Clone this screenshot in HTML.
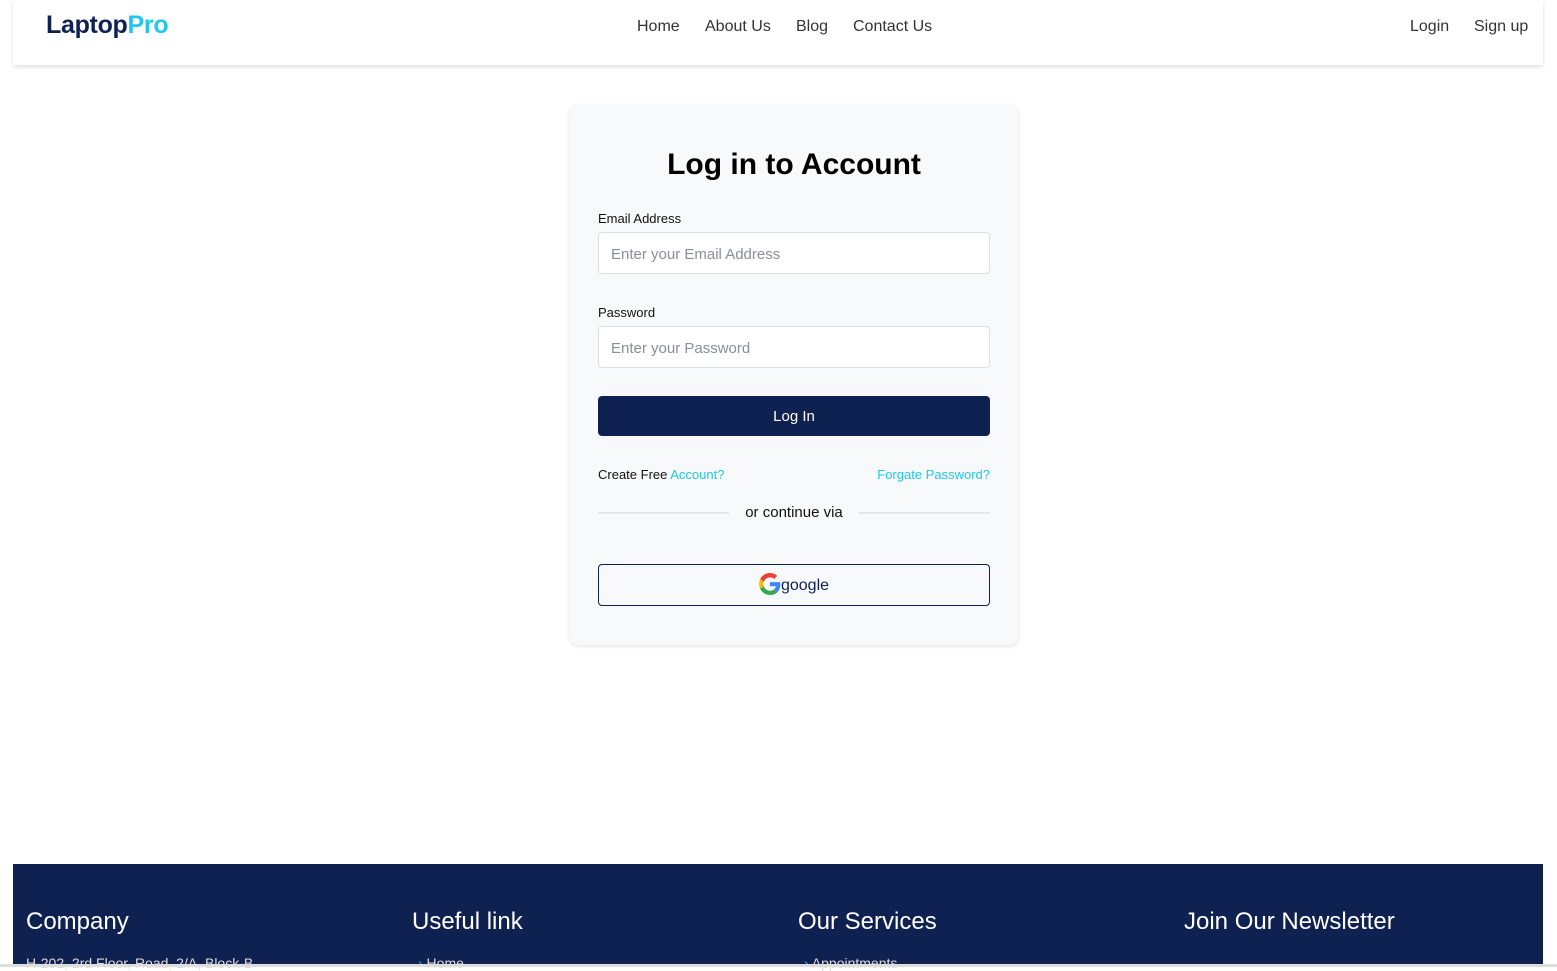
<!DOCTYPE html>
<html><head><meta charset="utf-8"><style>
*{box-sizing:border-box;margin:0;padding:0}
body{width:1557px;height:967px;overflow:hidden;background:#fff;font-family:"Liberation Sans",sans-serif;position:relative}
.nav{position:absolute;left:13px;top:0;width:1530px;height:65px;background:#fff;box-shadow:0 2px 4px rgba(0,0,0,.12)}
.logo{position:absolute;left:33px;top:11px;font-size:25px;font-weight:bold;color:#0f2150;letter-spacing:-.3px}
.logo span{color:#1fc8ec}
.links{position:absolute;top:18px;font-size:16px;color:#333;}
.links a{position:absolute;white-space:nowrap;color:#333;text-decoration:none}
.card{position:absolute;left:570px;top:105px;width:448px;height:540px;background:#f8f9fb;border-radius:8px;box-shadow:0 1px 4px rgba(0,0,0,.12)}
h1{position:absolute;top:43px;width:100%;text-align:center;font-size:30px;font-weight:bold;color:#000}
.lbl{position:absolute;left:28px;font-size:13px;color:#111}
.inp{position:absolute;left:28px;width:392px;height:42px;background:#fff;border:1px solid #dde0e4;border-radius:4px;padding:13px 12px;font-size:15px;color:#8a8f96}
.btn{position:absolute;left:28px;top:291px;width:392px;height:40px;background:#0f2150;border-radius:4px;color:#fff;font-size:15px;text-align:center;line-height:42px}
.sm{position:absolute;top:362px;font-size:13px;color:#111}
.cy{color:#1fc8ec}
.line{position:absolute;top:407px;height:2px;background:#e5e6e8;width:131px}
.g{position:absolute;left:28px;top:459px;width:392px;height:42px;border:1px solid #0f2150;border-radius:4px;text-align:center;font-size:16px;color:#0f2150;line-height:42px}
.foot{position:absolute;left:13px;top:864px;width:1530px;height:100px;background:#0f2150;color:#fff}
.foot h3{position:absolute;top:44px;font-size:24px;font-weight:normal}
.foot p{position:absolute;top:91px;font-size:14px;color:#ddd}
.bar{position:absolute;left:0;top:964px;width:1557px;height:3px;background:#ddd}
</style></head><body>
<div class="nav">
<div class="logo">Laptop<span>Pro</span></div>
<div class="links" style="left:0"><a style="left:624px">Home</a><a style="left:692px">About Us</a><a style="left:783px">Blog</a><a style="left:840px">Contact Us</a></div>
<div class="links" style="left:0"><a style="left:1397px">Login</a><a style="left:1461px">Sign up</a></div>
</div>
<div class="card">
<h1>Log in to Account</h1>
<div class="lbl" style="top:106px">Email Address</div>
<div class="inp" style="top:127px">Enter your Email Address</div>
<div class="lbl" style="top:200px">Password</div>
<div class="inp" style="top:221px">Enter your Password</div>
<div class="btn">Log In</div>
<div class="sm" style="left:28px">Create Free <span class="cy">Account?</span></div>
<div class="sm cy" style="right:28px">Forgate Password?</div>
<div class="line" style="left:28px"></div>
<div style="position:absolute;top:399px;width:100%;text-align:center;font-size:15px;color:#111">or continue via</div>
<div class="line" style="left:289px"></div>
<div class="g"><svg width="22" height="22" viewBox="0 0 48 48" style="vertical-align:-5px"><path fill="#EA4335" d="M24 9.5c3.5 0 6.6 1.2 9 3.5l6.7-6.7C35.6 2.4 30.2 0 24 0 14.6 0 6.6 5.4 2.6 13.2l7.8 6.1C12.3 13.7 17.7 9.5 24 9.5z"/><path fill="#4285F4" d="M46.5 24.5c0-1.6-.1-3.1-.4-4.5H24v9h12.7c-.6 3-2.200 5.5-4.7 7.2l7.6 5.9c4.4-4.1 6.9-10.1 6.9-17.6z"/><path fill="#FBBC05" d="M10.4 28.7c-.5-1.5-.8-3-.8-4.7s.3-3.2.8-4.7l-7.8-6.1C1 16.5 0 20.1 0 24s1 7.5 2.6 10.8l7.8-6.1z"/><path fill="#34A853" d="M24 48c6.5 0 11.9-2.1 15.9-5.8l-7.6-5.9c-2.1 1.4-4.9 2.3-8.3 2.3-6.3 0-11.7-4.200-13.6-10l-7.8 6.1C6.6 42.6 14.6 48 24 48z"/></svg>google</div>
</div>
<div class="foot">
<h3 style="left:13px">Company</h3><p style="left:13px">H-202, 2rd Floor, Road, 2/A, Block-B</p>
<h3 style="left:399px">Useful link</h3><p style="left:405px"><span style="color:#1fc8ec">›</span> Home</p>
<h3 style="left:785px">Our Services</h3><p style="left:791px"><span style="color:#1fc8ec">›</span> Appointments</p>
<h3 style="left:1171px">Join Our Newsletter</h3>
</div>
<div class="bar"></div>
</body></html>
